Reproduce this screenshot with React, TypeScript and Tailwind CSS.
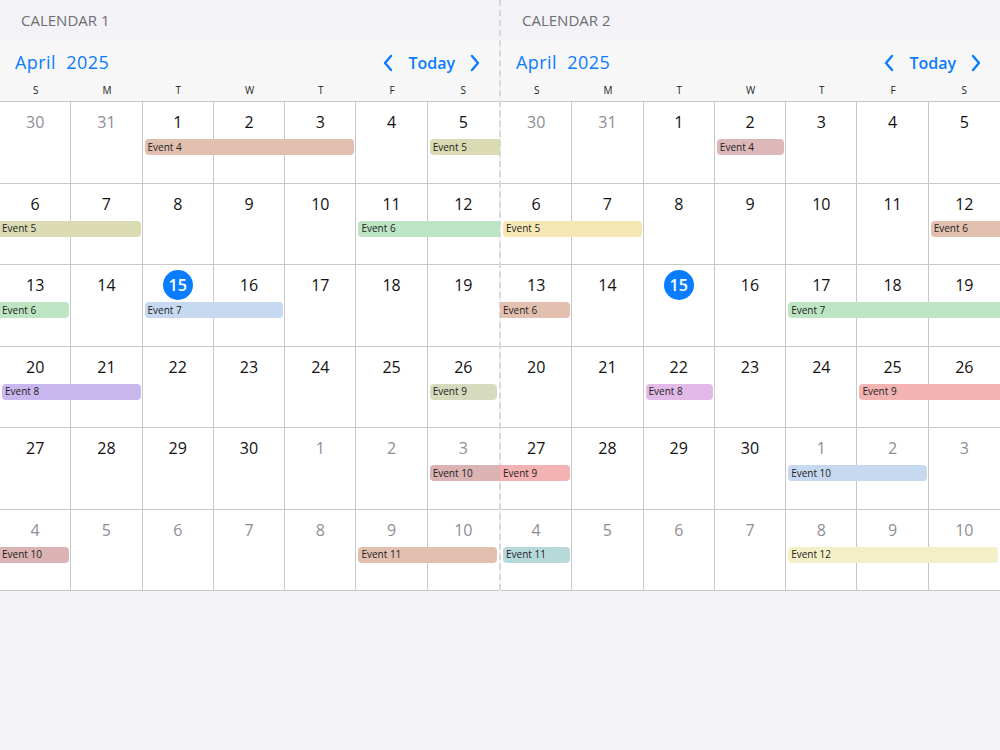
type Ev = { label: string; s: number; e: number; color: string; lo?: boolean; ro?: boolean };

const weeks: { d: number; other: boolean }[][] = (() => {
  const out: { d: number; other: boolean }[][] = [];
  const all: { d: number; other: boolean }[] = [
    { d: 30, other: true },
    { d: 31, other: true },
  ];
  for (let i = 1; i <= 30; i++) all.push({ d: i, other: false });
  for (let i = 1; i <= 10; i++) all.push({ d: i, other: true });
  for (let w = 0; w < 6; w++) out.push(all.slice(w * 7, w * 7 + 7));
  return out;
})();

const cal1: Ev[][] = [
  [
    { label: "Event 4", s: 2, e: 4, color: "#e3bfb0" },
    { label: "Event 5", s: 6, e: 6, color: "#dadbb2", ro: true },
  ],
  [
    { label: "Event 5", s: 0, e: 1, color: "#dadbb2", lo: true },
    { label: "Event 6", s: 5, e: 6, color: "#bde5c3", ro: true },
  ],
  [
    { label: "Event 6", s: 0, e: 0, color: "#bde5c3", lo: true },
    { label: "Event 7", s: 2, e: 3, color: "#c6d9f1" },
  ],
  [
    { label: "Event 8", s: 0, e: 1, color: "#c8b8ef" },
    { label: "Event 9", s: 6, e: 6, color: "#d6dbbd" },
  ],
  [{ label: "Event 10", s: 6, e: 6, color: "#dbb3b3", ro: true }],
  [
    { label: "Event 10", s: 0, e: 0, color: "#dbb3b3", lo: true },
    { label: "Event 11", s: 5, e: 6, color: "#e3bfb0" },
  ],
];

const cal2: Ev[][] = [
  [{ label: "Event 4", s: 3, e: 3, color: "#dcb8b8" }],
  [
    { label: "Event 5", s: 0, e: 1, color: "#f6e8b4" },
    { label: "Event 6", s: 6, e: 6, color: "#e3bfb0", ro: true },
  ],
  [
    { label: "Event 6", s: 0, e: 0, color: "#e3bfb0", lo: true },
    { label: "Event 7", s: 4, e: 6, color: "#bde5c3", ro: true },
  ],
  [
    { label: "Event 8", s: 2, e: 2, color: "#e3b9e8" },
    { label: "Event 9", s: 5, e: 6, color: "#f4b3b3", ro: true },
  ],
  [
    { label: "Event 9", s: 0, e: 0, color: "#f4b3b3", lo: true },
    { label: "Event 10", s: 4, e: 5, color: "#c6d9f1" },
  ],
  [
    { label: "Event 11", s: 0, e: 0, color: "#b8d9d9" },
    { label: "Event 12", s: 4, e: 6, color: "#f3f0c8" },
  ],
];

function Chevron({ dir }: { dir: "l" | "r" }) {
  return (
    <svg width="12" height="18" viewBox="0 0 12 18" fill="none" stroke="#0a7cff" strokeWidth="2.4" strokeLinecap="round" strokeLinejoin="round">
      {dir === "l" ? <path d="M9 2 L3 9 L9 16" /> : <path d="M3 2 L9 9 L3 16" />}
    </svg>
  );
}

function Calendar({ title, events }: { title: string; events: Ev[][] }) {
  return (
    <div className="flex flex-col w-[499px]">
      <div className="h-10 flex items-center pl-[21px] text-[15px] text-[#6e6e73] bg-[#f2f2f7]">{title}</div>
      <div className="bg-[#f7f7f7]">
        <div className="h-[45px] flex items-center justify-between pl-[15px] pr-[18px]">
          <span className="text-[18px] text-[#0a7cff] tracking-wide">April&nbsp; 2025</span>
          <div className="flex items-center gap-[14px]">
            <Chevron dir="l" />
            <span className="text-[16px] font-semibold text-[#0a7cff]">Today</span>
            <Chevron dir="r" />
          </div>
        </div>
        <div className="grid grid-cols-7 h-[16px] text-[10px] text-[#222] items-start">
          {["S", "M", "T", "W", "T", "F", "S"].map((d, i) => (
            <div key={i} className="text-center leading-[10px]">{d}</div>
          ))}
        </div>
      </div>
      <div className="bg-white border-t border-[#c8c8c8]">
        {weeks.map((wk, wi) => (
          <div key={wi} className="relative h-[81.5px] border-b border-[#c8c8c8]">
            <div className="grid grid-cols-7 h-full">
              {wk.map((c, ci) => {
                const today = !c.other && c.d === 15;
                return (
                  <div key={ci} className={`flex justify-center pt-[5px] ${ci < 6 ? "border-r border-[#c8c8c8]" : ""}`}>
                    {today ? (
                      <span className="w-[30px] h-[30px] rounded-full bg-[#0a7cff] text-white font-semibold text-[16px] flex items-center justify-center">15</span>
                    ) : (
                      <span className={`h-[30px] flex items-center text-[16px] ${c.other ? "text-[#8e8e93]" : "text-[#111]"}`}>{c.d}</span>
                    )}
                  </div>
                );
              })}
            </div>
            <div className="absolute left-0 right-0 top-[37px] h-4 grid grid-cols-7">
              {events[wi].map((ev, k) => (
                <div
                  key={k}
                  style={{ gridColumn: `${ev.s + 1} / ${ev.e + 2}`, gridRow: 1, background: ev.color }}
                  className={`h-4 flex items-center text-[10px] text-[#222] px-[3px] whitespace-nowrap overflow-hidden ${ev.lo ? "-ml-px rounded-r-[4px]" : "ml-[2px] rounded-l-[4px]"} ${ev.ro ? "-mr-px" : "mr-[2px] rounded-r-[4px]"}`}
                >
                  {ev.label}
                </div>
              ))}
            </div>
          </div>
        ))}
      </div>
    </div>
  );
}

export default function App() {
  return (
    <div className="w-[1000px] h-[750px] bg-[#f2f2f7] flex" style={{ fontFamily: '"Open Sans", "Noto Sans", sans-serif' }}>
      <Calendar title="CALENDAR 1" events={cal1} />
      <div className="w-[2px] h-[590px] border-l-2 border-dashed border-[#d8d8d8]" />
      <Calendar title="CALENDAR 2" events={cal2} />
    </div>
  );
}
